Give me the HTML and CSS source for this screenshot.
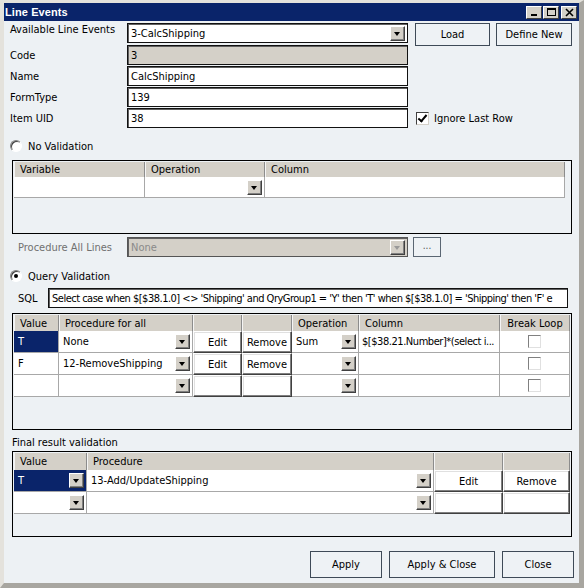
FILE: index.html
```html
<!DOCTYPE html>
<html>
<head>
<meta charset="utf-8">
<title>Line Events</title>
<link rel="stylesheet" href="styles.css">
</head>
<body>
<div class="window">
  <div class="titlebar">
    <span class="title">Line Events</span>
    <div class="caption-btns">
      <span class="cbtn"><svg width="13" height="11" viewBox="0 0 13 11"><rect x="3" y="7" width="6" height="2" fill="#000"/></svg></span>
      <span class="cbtn"><svg width="13" height="11" viewBox="0 0 13 11"><rect x="2.5" y="1.5" width="8" height="7" fill="none" stroke="#000"/><rect x="2" y="1" width="9" height="2" fill="#000"/></svg></span>
      <span class="cbtn close"><svg width="13" height="11" viewBox="0 0 13 11"><path d="M3 2 L10 9 M10 2 L3 9" stroke="#000" stroke-width="1.6"/></svg></span>
    </div>
  </div>

  <div class="client">
    <div class="row row-top">
      <span class="lbl">Available Line Events</span>
      <div class="field combo">3-CalcShipping<span class="dd"></span></div>
      <span class="btn btn-load">Load</span>
      <span class="btn btn-define">Define New</span>
    </div>

    <div class="row frow">
      <span class="lbl">Code</span>
      <div class="field readonly">3</div>
    </div>
    <div class="row frow">
      <span class="lbl">Name</span>
      <div class="field">CalcShipping</div>
    </div>
    <div class="row frow">
      <span class="lbl">FormType</span>
      <div class="field">139</div>
    </div>
    <div class="row frow">
      <span class="lbl">Item UID</span>
      <div class="field">38</div>
      <span class="check checked sunken"></span>
      <span class="check-lbl">Ignore Last Row</span>
    </div>

    <div class="row radio-row rr-first">
      <span class="radio"></span>
      <span class="radio-lbl">No Validation</span>
    </div>

    <div class="grid grid-vars">
      <div class="gtable g1">
        <div class="h">Variable</div>
        <div class="h">Operation</div>
        <div class="h">Column</div>
        <div class="c"></div>
        <div class="c"><span class="dd"></span></div>
        <div class="c"></div>
      </div>
    </div>

    <div class="row proc-row">
      <span class="lbl lbl-proc disabled">Procedure All Lines</span>
      <div class="field combo disabled-field">None<span class="dd dd-disabled"></span></div>
      <span class="btn btn-dots">...</span>
    </div>

    <div class="row radio-row rr-second">
      <span class="radio on"></span>
      <span class="radio-lbl">Query Validation</span>
    </div>

    <div class="row sql-row">
      <span class="lbl lbl-sql">SQL</span>
      <div class="field sql">Select case when $[$38.1.0] &lt;&gt; 'Shipping' and QryGroup1 = 'Y' then 'T' when $[$38.1.0] = 'Shipping' then 'F' e</div>
    </div>

    <div class="grid grid-query">
      <div class="gtable g2">
        <div class="h">Value</div>
        <div class="h">Procedure for all</div>
        <div class="h"></div>
        <div class="h"></div>
        <div class="h">Operation</div>
        <div class="h">Column</div>
        <div class="h hc">Break Loop</div>

        <div class="c sel">T</div>
        <div class="c">None<span class="dd"></span></div>
        <div class="c gbtn">Edit</div>
        <div class="c gbtn">Remove</div>
        <div class="c">Sum<span class="dd"></span></div>
        <div class="c tight">$[$38.21.Number]*(select i...</div>
        <div class="c cc"><span class="check"></span></div>

        <div class="c">F</div>
        <div class="c">12-RemoveShipping<span class="dd"></span></div>
        <div class="c gbtn">Edit</div>
        <div class="c gbtn">Remove</div>
        <div class="c"><span class="dd"></span></div>
        <div class="c"></div>
        <div class="c cc"><span class="check"></span></div>

        <div class="c"></div>
        <div class="c"><span class="dd"></span></div>
        <div class="c gbtn"></div>
        <div class="c gbtn"></div>
        <div class="c"><span class="dd"></span></div>
        <div class="c"></div>
        <div class="c cc"><span class="check"></span></div>
      </div>
    </div>

    <div class="row section-lbl">Final result validation</div>

    <div class="grid grid-final">
      <div class="gtable g3">
        <div class="h">Value</div>
        <div class="h">Procedure</div>
        <div class="h"></div>
        <div class="h"></div>

        <div class="c sel">T<span class="dd"></span></div>
        <div class="c">13-Add/UpdateShipping<span class="dd"></span></div>
        <div class="c gbtn">Edit</div>
        <div class="c gbtn">Remove</div>

        <div class="c"><span class="dd"></span></div>
        <div class="c"><span class="dd"></span></div>
        <div class="c gbtn"></div>
        <div class="c gbtn"></div>
      </div>
    </div>

    <div class="row actions">
      <span class="btn btn-apply">Apply</span>
      <span class="btn btn-applyclose">Apply &amp; Close</span>
      <span class="btn btn-close">Close</span>
    </div>
  </div>
</div>
</body>
</html>
```

FILE: styles.css
```css
* { box-sizing: border-box; }

html, body {
  margin: 0;
  padding: 0;
}

body {
  background: #d4d0c8;
  font-family: "DejaVu Sans Condensed", "Liberation Sans", sans-serif;
  font-size: 11px;
  color: #000;
}

/* window frame */
.window {
  width: 584px;
  height: 588px;
  background: #edf1f4;
  border-style: solid;
  border-width: 3px 5px 5px 4px;
  border-color: #e4e2dc #a8a6a0 #a8a6a0 #e4e2dc;
  display: flex;
  flex-direction: column;
}

.titlebar {
  height: 18px;
  background: #0a246a;
  display: flex;
  align-items: center;
  justify-content: space-between;
  padding: 0 2px 0 1px;
  flex: none;
}

.title {
  color: #fff;
  font-family: "Liberation Sans", sans-serif;
  font-weight: bold;
  font-size: 11px;
  letter-spacing: 0.1px;
}

.caption-btns {
  display: flex;
  gap: 1px;
}

.cbtn {
  width: 16px;
  height: 13px;
  background: #d4d0c8;
  border: 1px solid;
  border-color: #fff #404040 #404040 #fff;
  display: flex;
  align-items: center;
  justify-content: center;
}

.cbtn.close { margin-left: 1px; }

.client {
  flex: 1;
  padding: 0 5px 0 0;
  display: flex;
  flex-direction: column;
}

.row {
  display: flex;
  align-items: center;
  flex: none;
}

.lbl {
  width: 117px;
  margin-left: 6px;
  white-space: nowrap;
}

/* text inputs */
.field {
  width: 281px;
  height: 20px;
  background: #fff;
  border: 1px solid #111;
  box-shadow: inset 1px 1px 0 #606060;
  padding: 0 3px;
  display: flex;
  align-items: center;
  white-space: nowrap;
  overflow: hidden;
}

.field.readonly { background: #d4d0c8; }

.combo { padding-right: 2px; }

.disabled-field {
  background: #d4d0c8;
  color: #8a8a8a;
  border-color: #555;
}

.disabled { color: #707070; }

/* dropdown arrow button */
.dd {
  width: 15px;
  height: 15px;
  margin-left: auto;
  flex: none;
  background: #d4d0c8;
  border: 1px solid;
  border-color: #fff #404040 #404040 #fff;
  box-shadow: inset -1px -1px 0 #808080;
  position: relative;
}

.dd::after {
  content: "";
  position: absolute;
  left: 3px;
  top: 5px;
  border-style: solid;
  border-width: 4px 3.5px 0 3.5px;
  border-color: #000 transparent transparent transparent;
}

.dd-disabled::after { border-top-color: #9a9a9a; }

/* push buttons */
.btn {
  height: 23px;
  display: flex;
  align-items: center;
  justify-content: center;
  border: 1px solid #3e4a57;
  background: #eef2f5;
  white-space: nowrap;
  flex: none;
}

.row-top {
  margin-top: 2px;
  height: 22px;
  align-items: flex-start;
}

.btn-load { width: 75px; margin-left: 7px; }
.btn-define { width: 76px; margin-left: 6px; }

.frow {
  height: 20px;
  margin-bottom: 1px;
}

/* checkbox */
.check {
  width: 13px;
  height: 13px;
  background: #fff;
  border: 1px solid;
  border-color: #808080 #e0e0e0 #e0e0e0 #808080;
  flex: none;
  position: relative;
}

.check.sunken {
  border-color: #404040 #d4d0c8 #d4d0c8 #404040;
  margin-left: 8px;
}

.check.checked::after {
  content: "";
  position: absolute;
  left: 3px;
  top: 0px;
  width: 3px;
  height: 7px;
  border: solid #000;
  border-width: 0 2px 2px 0;
  transform: rotate(40deg);
}

.check-lbl { margin-left: 5px; }

/* radio buttons */
.radio-row { height: 14px; }
.rr-first { margin-top: 10px; }
.rr-second { margin-top: 12px; }

.radio {
  width: 12px;
  height: 12px;
  margin-left: 6px;
  border-radius: 50%;
  background: #fff;
  border: 1px solid;
  border-color: #808080 #fff #fff #808080;
  box-shadow: inset 1px 1px 0 #404040;
  position: relative;
  flex: none;
}

.radio.on::after {
  content: "";
  position: absolute;
  left: 3px;
  top: 3px;
  width: 4px;
  height: 4px;
  border-radius: 50%;
  background: #000;
}

.radio-lbl { margin-left: 6px; }

/* grids */
.grid {
  margin-left: 8px;
  width: 560px;
  border: 1px solid #000;
  padding: 1px;
  flex: none;
}

.gtable { display: grid; }

.grid-vars { margin-top: 7px; height: 74px; }
.g1 {
  width: 551px;
  grid-template-columns: 131px 120px 300px;
  grid-template-rows: 15px 21px;
}

.grid-query { margin-top: 5px; height: 117px; }
.g2 {
  grid-template-columns: 45px 134px 49px 50px 67px 141px 70px;
  grid-template-rows: 16px 22px 22px 22px;
}

.grid-final { margin-top: 2px; height: 86px; }
.g3 {
  grid-template-columns: 73px 347px 69px 67px;
  grid-template-rows: 17px 22px 22px;
}

.h {
  background: #d4d0c8;
  border-left: 1px solid #f4f4f4;
  border-right: 1px solid #8c8c8c;
  padding-left: 5px;
  display: flex;
  align-items: center;
  white-space: nowrap;
  overflow: hidden;
}

.h.hc { justify-content: center; padding-left: 0; }

.c {
  background: #fff;
  border-right: 1px solid #a8a8a8;
  border-bottom: 1px solid #a8a8a8;
  padding: 0 2px 0 4px;
  display: flex;
  align-items: center;
  white-space: nowrap;
  overflow: hidden;
}

.c.tight {
  padding-left: 3px;
  letter-spacing: -0.45px;
}

.c .dd { margin-left: auto; }

.c.sel {
  background: #0a246a;
  color: #fff;
}

.c.cc { justify-content: center; padding: 0; }

.c.gbtn {
  justify-content: center;
  padding: 0;
  border: 1px solid;
  border-color: #fff #404040 #404040 #fff;
  box-shadow: inset -1px -1px 0 #808080, inset 1px 1px 0 #e0e0e0;
}

/* procedure row */
.proc-row { margin-top: 3px; height: 20px; }
.lbl-proc { margin-left: 14px; width: 109px; }
.btn-dots {
  width: 28px;
  height: 20px;
  margin-left: 5px;
  border-color: #5a6672;
  font-size: 10px;
  color: #555;
  padding-bottom: 3px;
}

/* sql row */
.sql-row { margin-top: 5px; height: 20px; }
.lbl-sql { margin-left: 14px; width: 30px; }
.field.sql {
  width: 520px;
  letter-spacing: -0.5px;
}

.section-lbl {
  margin-top: 5px;
  height: 14px;
  margin-left: 8px;
}

/* bottom buttons */
.actions {
  margin-top: 14px;
  justify-content: flex-end;
  gap: 7px;
}

.actions .btn { height: 27px; }
.btn-apply { width: 72px; }
.btn-applyclose { width: 106px; }
.btn-close { width: 72px; }
```
